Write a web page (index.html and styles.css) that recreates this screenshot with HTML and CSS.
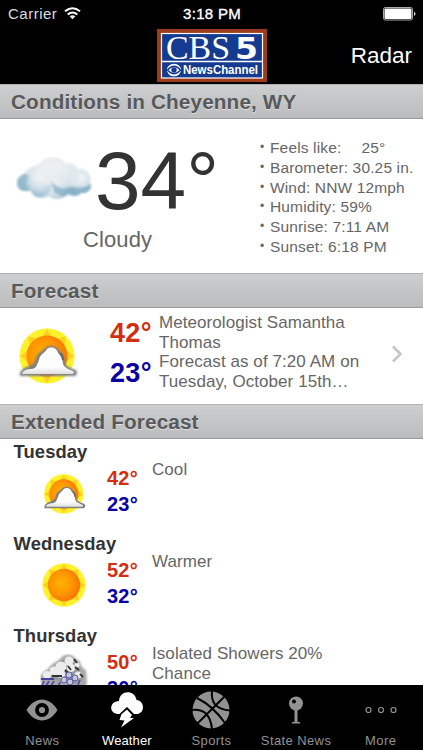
FILE: index.html
```
<!DOCTYPE html>
<html lang="en">
<head>
<meta charset="utf-8">
<title>Weather</title>
<link rel="stylesheet" href="styles.css">
</head>
<body>
<svg class="defs" width="0" height="0" aria-hidden="true">
  <defs>
    <radialGradient id="sunFill" cx=".42" cy=".45" r=".62">
      <stop offset="0" stop-color="#ffb400"/><stop offset=".55" stop-color="#ff9500"/><stop offset="1" stop-color="#fa6f08"/>
    </radialGradient>
    <linearGradient id="whiteCloud" x1="0" y1="0" x2="0" y2="1">
      <stop offset="0" stop-color="#fff"/><stop offset=".75" stop-color="#fcfcfc"/><stop offset="1" stop-color="#dedede"/>
    </linearGradient>
    <filter id="soft" x="-20%" y="-20%" width="140%" height="140%"><feGaussianBlur stdDeviation=".8"/></filter>
    <symbol id="sun" viewBox="0 0 60 60">
      <circle cx="30" cy="30" r="29.500" fill="#fff22b"/>
      <path d="M30 1l7 11 13-3-2 13 11 8-11 8 2 13-13-3-7 11-7-11-13 3 2-13L1 30l11-8-2-13 13 3z" fill="#ffcf1d"/>
      <circle cx="30" cy="30" r="22" fill="url(#sunFill)"/>
    </symbol>
    <symbol id="partly" viewBox="0 0 60 56">
      <use href="#sun" x="1" y="0" width="56" height="56"/>
      <path d="M2 48C1 43 5 40 11 38C15 37 17 34 18 30C19 25 23 24 26 21C30 16 38 17 41 22C45 25 46 30 47 34C47 38 51 39 55 41C60 42 60 46 57 48z" fill="#808080" filter="url(#soft)"/>
      <path d="M4 46C5 42 9 41 14 41C19 40 19 36 21 32C22 26 27 25 29 21C33 18 39 20 40 25C43 27 44 31 45 35C45 39 50 41 55 43C57 45 56 46 53 46z" fill="url(#whiteCloud)"/>
      <path d="M42 25q3 3 3 7" fill="none" stroke="#666" stroke-width="2"/>
    </symbol>
  </defs>
</svg>
<div class="screen">
  <header class="top">
    <div class="status">
      <span class="carrier">Carrier
        <svg width="17" height="13" viewBox="0 0 17 13"><g fill="none" stroke="#fff" stroke-width="2"><path d="M1 4.3Q8.500-1.800 16 4.300"/><path d="M3.700 7.500Q8.500 3.500 13.300 7.500"/></g><path d="M5.700 9.300Q8.500 7.300 11.300 9.300L8.500 12.300z" fill="#fff"/></svg>
      </span>
      <span class="clock">3:18 PM</span>
      <svg class="battery" width="33" height="14" viewBox="0 0 33 14"><rect x=".5" y=".5" width="29" height="12.500" rx="1.800" fill="none" stroke="#aaa"/><rect x="1.500" y="1.500" width="27" height="10.500" rx="1" fill="#fff"/><path d="M31 4.500q3 2.300 0 4.600z" fill="#ddd"/></svg>
    </div>
    <div class="nav">
      <svg class="logo" width="110" height="53" viewBox="0 0 110 53">
        <rect width="110" height="53" fill="#9c3a1b"/>
        <rect x="4.500" y="4.500" width="101" height="44.500" fill="#153b90" stroke="#fff" stroke-width="1.200"/>
        <path d="M5 32.500h100" stroke="#fff" stroke-width="1.300"/>
        <text x="9" y="30" class="logo-cbs" textLength="64" lengthAdjust="spacingAndGlyphs">CBS</text>
        <text x="78" y="30" class="logo-five" textLength="23" lengthAdjust="spacingAndGlyphs">5</text>
        <ellipse cx="17" cy="41" rx="7" ry="6.300" fill="#fff"/>
        <path d="M10.500 41Q17 33.500 23.500 41Q17 48.500 10.500 41z" fill="none" stroke="#153b90" stroke-width="1.300"/>
        <circle cx="17" cy="41" r="2.700" fill="#153b90"/>
        <text x="26" y="45" class="logo-news" textLength="75" lengthAdjust="spacingAndGlyphs">NewsChannel</text>
      </svg>
      <span class="radar">Radar</span>
    </div>
  </header>
  <main class="content">
    <h2 class="bar">Conditions in Cheyenne, WY</h2>
    <section class="now">
      <svg class="now-icon" width="80" height="46" viewBox="0 0 80 46">
        <defs>
          <linearGradient id="cloudBody" x1="0" y1="0" x2="0" y2="1"><stop offset="0" stop-color="#eceff1"/><stop offset=".4" stop-color="#dbe5ea"/><stop offset=".75" stop-color="#adc9d8"/><stop offset="1" stop-color="#8fb7cd"/></linearGradient>
          <radialGradient id="puff" cx=".5" cy=".25" r=".75"><stop offset="0" stop-color="#f4f7f9"/><stop offset=".55" stop-color="#d3e1e9" stop-opacity=".85"/><stop offset="1" stop-color="#8fb6cb" stop-opacity=".5"/></radialGradient>
          <clipPath id="cloudClip"><path d="M10 34C0 34-1 20 9 17C13 8 21 10 25 6C32-3 47-1 51 7C56 4 61 8 63 12C73 10 77 20 75 25C79 33 71 37 66 36C62 40 56 39 53 37C46 44 37 42 34 39C26 42 18 41 16 34z"/></clipPath>
        </defs>
        <g filter="url(#soft)"><g clip-path="url(#cloudClip)">
          <rect width="80" height="46" fill="url(#cloudBody)"/>
          <circle cx="7" cy="26" r="10" fill="#7facc4" opacity=".7"/>
          <circle cx="37" cy="34" r="15" fill="url(#puff)"/>
          <circle cx="66" cy="27" r="12" fill="url(#puff)"/>
          <circle cx="24" cy="27" r="13" fill="url(#puff)"/>
          <ellipse cx="37" cy="16" rx="16" ry="12" fill="#eef1f3" opacity=".7"/>
          <path d="M36 23Q43 35 58 30Q70 32 77 26L74 38Q50 43 39 35z" fill="#6fa2bd" opacity=".6"/>
          <ellipse cx="53" cy="21" rx="11" ry="8" fill="#e2eaee" opacity=".65"/>
        </g></g>
      </svg>
      <div class="now-temp"><div class="degrees">34°</div><div class="sky">Cloudy</div></div>
      <ul class="facts">
        <li><i>•</i><span>Feels like:<b>25°</b></span></li>
        <li><i>•</i><span>Barometer: 30.25 in.</span></li>
        <li><i>•</i><span>Wind: NNW 12mph</span></li>
        <li><i>•</i><span>Humidity: 59%</span></li>
        <li><i>•</i><span>Sunrise: 7:11 AM</span></li>
        <li><i>•</i><span>Sunset: 6:18 PM</span></li>
      </ul>
    </section>
    <h2 class="bar">Forecast</h2>
    <section class="forecast">
      <svg class="fc-icon" width="60" height="56"><use href="#partly"/></svg>
      <div class="fc-temps"><div class="hi">42°</div><div class="lo">23°</div></div>
      <p class="fc-text">Meteorologist Samantha<br>Thomas<br>Forecast as of 7:20 AM on<br>Tuesday, October 15th…</p>
      <svg class="chevron" width="13" height="18" viewBox="0 0 13 18"><path d="M2 1.500L9.500 9L2 16.500" fill="none" stroke="#c5c5ca" stroke-width="2.600"/></svg>
    </section>
    <h2 class="bar">Extended Forecast</h2>
    <section class="days">
      <article class="day">
        <h3>Tuesday</h3>
        <div class="day-row">
          <svg class="day-icon" width="44" height="44" viewBox="0 0 44 44"><use href="#partly" x="1" y="1" width="43" height="40"/></svg>
          <div class="day-temps"><div class="hi">42°</div><div class="lo">23°</div></div><p>Cool</p>
        </div>
      </article>
      <article class="day">
        <h3>Wednesday</h3>
        <div class="day-row">
          <svg class="day-icon sunny" width="44" height="44"><use href="#sun"/></svg>
          <div class="day-temps"><div class="hi">52°</div><div class="lo">32°</div></div><p>Warmer</p>
        </div>
      </article>
      <article class="day">
        <h3>Thursday</h3>
        <div class="day-row">
          <svg class="day-icon rain" width="50" height="44" viewBox="0 0 50 44">
            <path d="M1 27C-1 21 3 18 8 15C11 10 16 8 20 5C24-1 32-1 36 5C41 6 40 11 43 14C48 16 46 22 47 28L44 40H6z" fill="#a8a8a8" filter="url(#soft)"/>
            <path d="M3 25Q2 19 8 18Q12 13 16 12Q20 6 25 5Q30 2 34 6L44 24L35 30L15 26z" fill="#999"/>
            <g fill="#ececec"><circle cx="7" cy="21" r="4"/><circle cx="14" cy="17" r="4.500"/><circle cx="21" cy="13" r="5.500"/><circle cx="29" cy="7" r="4.500"/><circle cx="31" cy="14" r="4"/><circle cx="38" cy="21" r="3.500"/><circle cx="21" cy="20" r="4"/><circle cx="37" cy="11" r="2.500"/></g>
            <path d="M34 5l3 4M28 12l3 4M35 13l4 3M40 20l3 3M12 22h10M25 16l3 3" stroke="#333" stroke-width="1.800"/>
            <g fill="#c5c5df" stroke="#5c5ca5" stroke-width="1"><circle cx="24" cy="26" r="3"/><circle cx="29" cy="21" r="3"/><circle cx="35" cy="24" r="3"/><circle cx="30" cy="28" r="3"/></g>
            <path d="M1 25h13" stroke="#3737a0" stroke-width="1.800"/>
            <path d="M4 27l-2 4M9 27l-3 5M14 27l-3 5M20 28l-2 5M40 26l-2 5" stroke="#5050b0" stroke-width="1.800"/>
          </svg>
          <div class="day-temps"><div class="hi">50°</div><div class="lo">30°</div></div><p>Isolated Showers 20%<br>Chance</p>
        </div>
      </article>
    </section>
  </main>
  <nav class="tabs">
    <div class="tab"><svg width="40" height="40" viewBox="0 0 40 40"><path d="M4.500 20C13 6 27 6 35.500 20C27 34 13 34 4.500 20z" fill="#929292"/><circle cx="20" cy="20" r="5" fill="none" stroke="#000" stroke-width="3.800"/></svg><span>News</span></div>
    <div class="tab active"><svg width="40" height="40" viewBox="0 0 40 40"><path d="M11 24C1.500 23.500 2 11.500 12 11C12.500-.5 28-.5 29.500 10C38 10.500 38.500 24 29 24H26L20 17.500L13.500 24z" fill="#fff"/><path d="M20 19.500L25 25L23 28H27L14 37.500L17.500 30.500L12.500 30L14.500 24z" fill="#fff"/><path d="M13 24.500L20 18L26.500 24.500" fill="none" stroke="#000" stroke-width="1.500"/></svg><span>Weather</span></div>
    <div class="tab"><svg width="40" height="40" viewBox="0 0 40 40"><circle cx="20" cy="20" r="18.500" fill="#929292"/><g fill="none" stroke="#000" stroke-width="2"><path d="M33.500 6.500L6.500 33.500M6 8Q22 16 34 33M21 1Q19 19 39 20.500M1 20Q19 18 21 39"/></g></svg><span>Sports</span></div>
    <div class="tab"><svg width="40" height="40" viewBox="0 0 40 40"><circle cx="20" cy="13.500" r="7" fill="#929292"/><path d="M18.500 20h3v12h-3zM16 32h8v1.500h-8z" fill="#929292"/><circle cx="18" cy="11.500" r="2" fill="#000"/></svg><span>State News</span></div>
    <div class="tab"><svg width="40" height="40" viewBox="0 0 40 40"><g fill="none" stroke="#929292" stroke-width="1.200"><circle cx="7.500" cy="20" r="2.500"/><circle cx="20" cy="20" r="2.500"/><circle cx="32.500" cy="20" r="2.500"/></g></svg><span>More</span></div>
  </nav>
</div>
</body>
</html>
```
FILE: styles.css
```
* { box-sizing: border-box; }
body, h2, h3, p, ul { margin: 0; padding: 0; }
body { width: 423px; height: 750px; overflow: hidden; background: #fff; color: #666; font-family: "Liberation Sans", Arial, sans-serif; }
svg { display: block; flex: none; }
.defs { position: absolute; }
.screen { height: 750px; display: flex; flex-direction: column; }
.top { height: 84px; flex: none; background: #000; color: #fff; display: flex; flex-direction: column; }
.status { height: 28px; display: grid; grid-template-columns: 1fr auto 1fr; align-items: center; padding: 0 7px 0 8px; font-size: 15px; }
.carrier { display: flex; align-items: center; gap: 7px; color: #ddd; letter-spacing: .5px; line-height: 18px; padding-bottom: 1px; }
.clock { letter-spacing: .3px; line-height: 18px; padding-bottom: 1px; -webkit-text-stroke: .35px #fff; }
.battery { justify-self: end; }
.nav { height: 56px; display: grid; grid-template-columns: 1fr 110px 1fr; padding: 1px 11px 0; }
.logo { grid-column: 2; }
.radar { grid-column: 3; justify-self: end; font-size: 22.500px; line-height: 54px; }
.logo text { fill: #fff; }
.logo-cbs { font: 34px "Liberation Serif", serif; }
.logo-five { font: bold 31px "DejaVu Sans", sans-serif; }
.logo-news { font: bold 12.500px "Liberation Sans", sans-serif; }
.content { flex: 1; min-height: 0; overflow: hidden; }
.bar { height: 35px; border-top: 1px solid #b0b1b3; border-bottom: 1px solid #98999b; background: linear-gradient(#cdced0, #bbbcbe); color: #58595b; font-size: 20.700px; line-height: 33px; padding-left: 11px; letter-spacing: .15px; text-shadow: 0 1px #dedede; white-space: nowrap; }
.now { height: 154px; display: flex; }
.now-icon { margin: 38px 0 0 15px; }
.now-temp { width: 165px; }
.degrees { font-size: 82px; line-height: 82px; color: #333; margin-top: 21px; white-space: nowrap; }
.sky { font-size: 22px; line-height: 26px; margin: 5px 0 0 -12px; letter-spacing: .1px; }
.facts { list-style: none; margin-top: 19px; font-size: 15.500px; line-height: 19.800px; letter-spacing: .15px; white-space: nowrap; }
.facts li { display: flex; }
.facts i { width: 10px; font-style: normal; font-size: 12px; }
.facts b { font-weight: 400; margin-left: 20px; }
.forecast { height: 96px; display: flex; }
.fc-icon { margin: 20px 0 0 18px; }
.fc-temps { width: 80px; padding: 5px 0 0 32px; font-size: 27px; line-height: 40px; font-weight: 700; letter-spacing: .3px; }
.hi { color: #d42e10; }
.lo { color: #0a00a4; }
.fc-text { width: 233px; padding: 5px 0 0 1px; font-size: 17px; line-height: 19.600px; letter-spacing: .07px; white-space: nowrap; }
.chevron { margin-top: 37px; }
.day { height: 92px; }
.day h3 { padding: 1px 0 0 13.500px; color: #333; font-size: 18.400px; line-height: 24px; letter-spacing: .1px; }
.day-row { display: flex; }
.day-icon { margin: 9px 0 0 42px; width: 44px; }
.sunny { margin-top: 7px; }
.rain { width: 50px; margin: 6px -4px 0 40px; }
.day-temps { width: 66px; padding: 1px 0 0 21px; font-size: 20px; line-height: 26px; font-weight: 700; letter-spacing: .2px; }
.day p { font-size: 17px; line-height: 19.500px; margin-top: -4px; letter-spacing: .07px; white-space: nowrap; }
.tabs { height: 65px; flex: none; background: #000; display: grid; grid-template-columns: repeat(5, 84.600px); font-size: 13px; letter-spacing: .4px; color: #929292; }
.tab { display: flex; flex-direction: column; align-items: center; padding-top: 5px; }
.tab span { line-height: 15px; margin-top: 3px; white-space: nowrap; }
.active { color: #fff; }
.active span { letter-spacing: .1px; }
```
